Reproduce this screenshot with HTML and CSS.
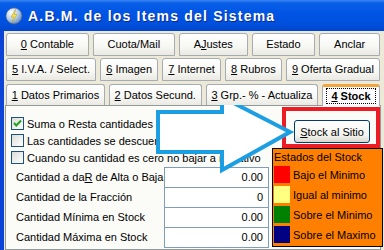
FILE: index.html
```html
<!DOCTYPE html>
<html lang="es">
<head>
  <meta charset="UTF-8" />
  <title>A.B.M. de los Items del Sistema</title>
  <link rel="stylesheet" href="styles.css">
</head>
<body>
  <div class="window">
    <div class="titlebar">
      <svg class="app-icon" width="18" height="18" viewBox="0 0 18 18">
        <defs>
          <radialGradient id="glb" cx="0.35" cy="0.3" r="0.8">
            <stop offset="0" stop-color="#ffffff" />
            <stop offset="0.5" stop-color="#b9cfe8" />
            <stop offset="1" stop-color="#4f79b3" />
          </radialGradient>
        </defs>
        <circle cx="9" cy="9" r="8.2" fill="url(#glb)" stroke="#2d55a0" stroke-width="0.8" />
        <polygon points="10.5,2.5 6,10 9,10 7,15.5 12,7.5 9.2,7.5" fill="#f5e34a" stroke="#b49a18" stroke-width="0.5" />
      </svg>
      <span class="title">A.B.M. de los Items del Sistema</span>
    </div>

    <div class="frame">
      <div class="tab-row">
        <div class="tab"><u>0</u> Contable</div>
        <div class="tab">Cuota/Mail</div>
        <div class="tab">A<u>J</u>ustes</div>
        <div class="tab">Estado</div>
        <div class="tab">Anclar</div>
      </div>
      <div class="tab-row">
        <div class="tab"><u>5</u> I.V.A. / Select.</div>
        <div class="tab"><u>6</u> Imagen</div>
        <div class="tab"><u>7</u> Internet</div>
        <div class="tab"><u>8</u> Rubros</div>
        <div class="tab"><u>9</u> Oferta Gradual</div>
      </div>
      <div class="tab-row last">
        <div class="tab"><u>1</u> Datos Primarios</div>
        <div class="tab"><u>2</u> Datos Secund.</div>
        <div class="tab"><u>3</u> Grp.- % - Actualiza</div>
        <div class="tab active"><span class="focus"><u>4</u> Stock</span></div>
      </div>

      <div class="page">
        <div class="col-left">
          <label class="check">
            <span class="box">
              <svg width="11" height="11" viewBox="0 0 11 11"><polyline points="2,5 4.3,7.5 9,2.5" fill="none" stroke="#21a121" stroke-width="2" /></svg>
            </span>
            <span>Suma o Resta cantidades con Stock al Sitio</span>
          </label>
          <label class="check"><span class="box"></span><span>Las cantidades se descuentan del Sitio</span></label>
          <label class="check"><span class="box"></span><span>Cuando su cantidad es cero no bajar a negativo</span></label>

          <div class="field">
            <span class="field-label">Cantidad a da<u>R</u> de Alta o Baja</span>
            <span class="input">0.00</span>
          </div>
          <div class="field">
            <span class="field-label">Cantidad de la Fracción</span>
            <span class="input">0</span>
          </div>
          <div class="field">
            <span class="field-label">Cantidad Mínima en Stock</span>
            <span class="input">0.00</span>
          </div>
          <div class="field">
            <span class="field-label">Cantidad Máxima en Stock</span>
            <span class="input">0.00</span>
          </div>
        </div>

        <div class="col-right">
          <div class="callout">
            <div class="btn"><span><u>S</u>tock al Sitio</span></div>
          </div>
          <div class="legend">
            <div class="legend-title">Estados del Stock</div>
            <div class="legend-item"><span class="swatch red"></span>Bajo el Minimo</div>
            <div class="legend-item"><span class="swatch yellow"></span>Igual al minimo</div>
            <div class="legend-item"><span class="swatch green"></span>Sobre el Minimo</div>
            <div class="legend-item"><span class="swatch navy"></span>Sobre el Maximo</div>
          </div>
        </div>
      </div>
    </div>

    <!-- flecha de señalamiento encima del formulario -->
    <svg class="arrow" width="384" height="250" viewBox="0 0 384 250">
      <polygon points="158,112 222,112 222,97 290,132 222,170 222,152 158,152"
               fill="#ffffff" stroke="#1c9ee2" stroke-width="4" stroke-linejoin="miter" />
    </svg>
  </div>
</body>
</html>
```

FILE: styles.css
```css
body {
  margin: 0;
  background: #ece9d8;
  font-family: "Liberation Sans", Arial, sans-serif;
  font-size: 11px;
  color: #000;
}
.window {
  position: relative;
  width: 384px;
  height: 250px;
  overflow: hidden;
  display: flex;
  flex-direction: column;
  background: #ece9d8;
}
.titlebar {
  height: 31px;
  flex: none;
  display: flex;
  align-items: center;
  gap: 5px;
  padding-left: 5px;
  background: linear-gradient(#3b86f5 0px, #0a5fe8 3px, #0055e5 12px, #0050dd 24px, #0046cc 31px);
}
.app-icon {
  margin-top: 1px;
}
.title {
  color: #fff;
  font-weight: bold;
  font-size: 14px;
  letter-spacing: 1.2px;
  text-shadow: 1px 1px 0 #0b2a8a;
}
.frame {
  flex: 1;
  display: flex;
  flex-direction: column;
  border-left: 4px solid #0b44d6;
  padding: 2px 3px 0 1px;
}
.tab-row {
  display: flex;
  gap: 4px;
  height: 23px;
  margin: 0 1px 2px;
}
.tab {
  flex: 1 1 auto;
  box-sizing: border-box;
  text-align: center;
  line-height: 20px;
  white-space: nowrap;
  border: 1px solid #a5acb2;
  border-radius: 3px 3px 0 0;
  background: linear-gradient(#ffffff, #f7f7f4 60%, #eae9e2);
}
.tab-row.last {
  height: 22px;
  margin-bottom: 0;
  position: relative;
  z-index: 1;
}
.tab-row.last .tab {
  margin-top: 1px;
  border-bottom: none;
}
.tab.active {
  flex: 0 0 58px;
  margin: -1px 0 -1px;
  line-height: 19px;
  border-top: 3px solid #f2a53c;
  border-bottom: none;
  background: #fcfcfe;
  font-weight: bold;
}
.focus {
  border: 1px dotted #000;
  padding: 1px 4px;
}
.page {
  flex: 1;
  display: flex;
  border: 1px solid #919b9c;
  background: #fbfbf8;
  padding: 0 0 0 5px;
}
.col-left {
  width: 258px;
  flex: none;
  padding-top: 9px;
}
.check {
  display: flex;
  align-items: center;
  gap: 3px;
  height: 17px;
  white-space: nowrap;
}
.box {
  width: 11px;
  height: 11px;
  flex: none;
  border: 1px solid #1c5180;
  background: linear-gradient(135deg, #dcdcd7, #ffffff);
  display: flex;
}
.field {
  display: flex;
  align-items: flex-start;
  justify-content: space-between;
  height: 20px;
}
.field:first-of-type {
  margin-top: 1px;
}
.field-label {
  padding: 4px 0 0 5px;
}
.input {
  box-sizing: border-box;
  width: 105px;
  height: 21px;
  border: 1px solid #7f9db9;
  background: #fff;
  text-align: right;
  padding-right: 5px;
  line-height: 19px;
}
.col-right {
  width: 111px;
  flex: none;
  margin-left: 3px;
}
.callout {
  box-sizing: border-box;
  width: 98px;
  height: 41px;
  margin: 1px 0 0 10px;
  border: 4px solid #ec1c24;
  padding: 9px 0 0 8px;
}
.btn {
  box-sizing: border-box;
  width: 76px;
  height: 23px;
  border: 1px solid #003c74;
  border-radius: 3px;
  background: linear-gradient(#ffffff, #f3f3ef 70%, #d8d6cc);
  display: flex;
  align-items: center;
  justify-content: center;
}
.legend {
  box-sizing: border-box;
  height: 99px;
  border: 1px solid #000;
  background: #ff8000;
  padding: 0 0 0 1px;
}
.legend-title {
  height: 17px;
  line-height: 16px;
}
.legend-item {
  display: flex;
  align-items: center;
  gap: 3px;
  height: 17px;
  margin-bottom: 3px;
}
.swatch {
  width: 16px;
  height: 17px;
  flex: none;
}
.red { background: #ff0000; }
.yellow { background: #ffff80; }
.green { background: #008000; }
.navy { background: #000080; }
.arrow {
  position: absolute;
  left: 0;
  top: 0;
  pointer-events: none;
}
```
